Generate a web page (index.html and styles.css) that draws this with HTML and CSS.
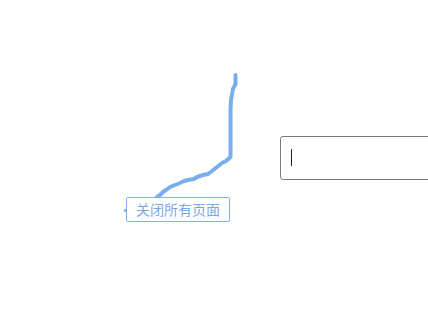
FILE: index.html
```html
<!DOCTYPE html>
<html>
<head>
<meta charset="utf-8">
<link rel="stylesheet" href="styles.css">
</head>
<body>
<div class="canvas">
  <svg class="stroke" width="428" height="321" viewBox="0 0 428 321">
    <polyline points="235.5,75 235.5,84 233,89 231,100 230.5,110 230.5,157 226,161 222,163 217,167 212,171 208,174 203,175 197,177 194,179 188,180 184,181 180,183 175,185 170,187 166,190 163,192 160,195 157,197"
      fill="none" stroke="#7aaeea" stroke-width="4" stroke-linecap="round" stroke-linejoin="round"/>
  </svg>
  <div class="tip"><span class="tip-dot"></span>关闭所有页面</div>
  <div class="field"><span class="caret"></span></div>
</div>
</body>
</html>
```
FILE: styles.css
```css
html, body {
  margin: 0;
  padding: 0;
  background: #ffffff;
}
.canvas {
  position: relative;
  width: 428px;
  height: 321px;
  overflow: hidden;
  font-family: "Noto Sans CJK SC", "Noto Sans", sans-serif;
}
.stroke {
  position: absolute;
  left: 0;
  top: 0;
}
.tip {
  position: absolute;
  left: 126px;
  top: 197px;
  height: 23px;
  width: 102px;
  box-sizing: content-box;
  border: 1px solid #80b0ee;
  border-radius: 2px;
  background: #ffffff;
  color: #7aaae6;
  font-size: 14px;
  font-weight: 400;
  line-height: 23px;
  text-align: center;
  white-space: nowrap;
}
.tip-dot {
  position: absolute;
  left: -3px;
  top: 11px;
  width: 3px;
  height: 3px;
  border-radius: 50%;
  background: #7aaeea;
}
.field {
  position: absolute;
  left: 280px;
  top: 136px;
  width: 160px;
  height: 42px;
  border: 1px solid #7a7a7a;
  border-radius: 3px;
  background: #ffffff;
}
.caret {
  position: absolute;
  left: 10px;
  top: 12px;
  width: 1px;
  height: 17px;
  background: #222;
}
```
